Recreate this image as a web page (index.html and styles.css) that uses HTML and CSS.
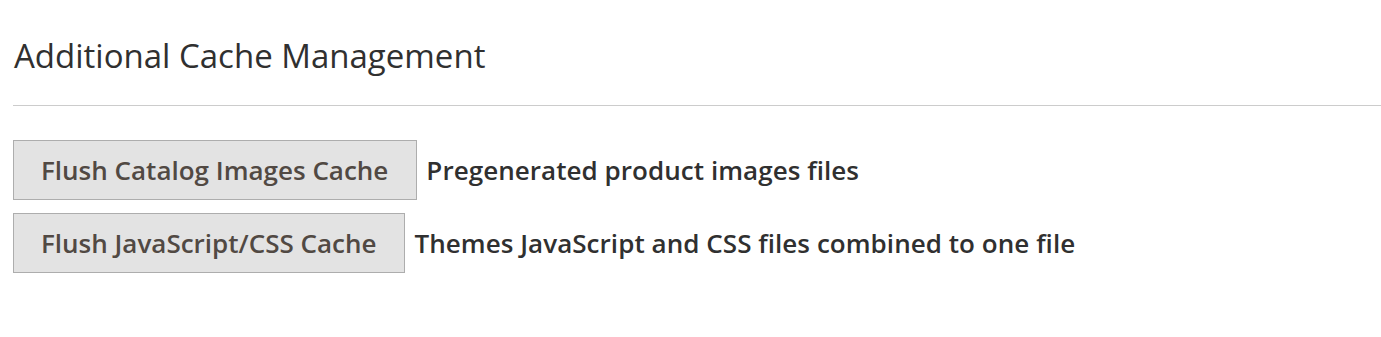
FILE: index.html
```html
<!DOCTYPE html>
<html lang="en">
<head>
  <meta charset="UTF-8">
  <title>Additional Cache Management</title>
  <link rel="stylesheet" href="styles.css">
</head>
<body>
  <div class="section">
    <h2 class="section-title">Additional Cache Management</h2>
    <div class="actions">
      <div class="action-row">
        <button class="action-default">Flush Catalog Images Cache</button>
        <span class="note">Pregenerated product images files</span>
      </div>
      <div class="action-row">
        <button class="action-default">Flush JavaScript/CSS Cache</button>
        <span class="note">Themes JavaScript and CSS files combined to one file</span>
      </div>
    </div>
  </div>
</body>
</html>
```

FILE: styles.css
```css
body {
  margin: 0;
  background-color: #fff;
  font-family: "Open Sans", "Liberation Sans", sans-serif;
  color: #303030;
}

.section {
  padding: 0 0 0 13px;
}

.section-title {
  margin: 0;
  padding: 34px 0 28px 1px;
  font-size: 33px;
  font-weight: 400;
  line-height: 43px;
  color: #303030;
  border-bottom: 1px solid #cccccc;
}

.actions {
  display: flex;
  flex-direction: column;
  gap: 13px;
  padding-top: 34px;
}

.action-row {
  display: flex;
  align-items: center;
  gap: 9px;
}

.action-default {
  font-family: inherit;
  font-size: 26px;
  font-weight: 600;
  line-height: 34px;
  color: #514943;
  background-color: #e3e3e3;
  border: 1px solid #adadad;
  border-radius: 0;
  padding: 12px 28px 12px 27px;
  cursor: pointer;
}

.note {
  font-size: 26px;
  font-weight: 600;
  letter-spacing: 0.05px;
  color: #303030;
}
```
